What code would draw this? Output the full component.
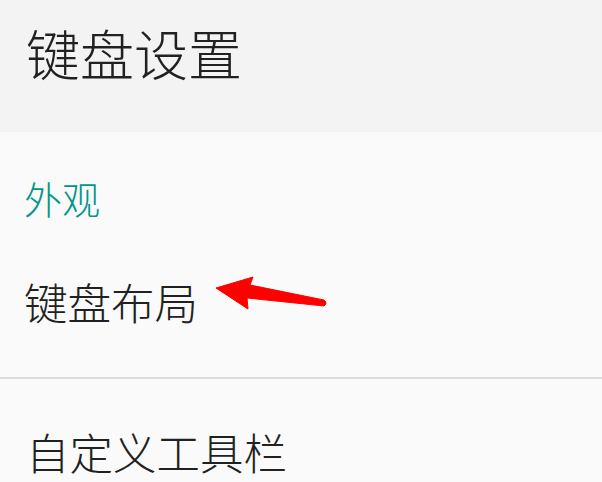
export default function App() {
  const font = { fontFamily: '"Noto Sans CJK SC", "Noto Sans", sans-serif' };
  return (
    <div className="relative w-[602px] h-[482px] overflow-hidden bg-[#fafafa]" style={font}>
      <div className="h-[132px] bg-[#f3f3f3] pl-[26px] pt-[25px]">
        <div className="text-[54px] leading-[55px] font-light text-[#212121]">键盘设置</div>
      </div>
      <div className="pl-[24px] pt-[47px]">
        <div className="text-[38px] leading-[38.5px] font-light text-[#009688]">外观</div>
      </div>
      <div className="pl-[24px] pt-[62px] pb-[53px]">
        <div className="text-[43.5px] leading-[44px] font-light text-[#212121]">键盘布局</div>
      </div>
      <div className="h-[2px] bg-[#dcdcdc]" />
      <div className="pl-[26px] pt-[51px]">
        <div className="text-[43.5px] leading-[44px] font-light text-[#212121]">自定义工具栏</div>
      </div>
      <svg className="absolute left-0 top-0" width="602" height="482" viewBox="0 0 602 482">
        <path
          d="M216 288 L253 277 L250 285 L324 300 Q328 303 324 306 L247 298 L248 309 Z"
          fill="#ff0000"
          stroke="#ff0000"
          strokeWidth="1"
          strokeLinejoin="round"
        />
      </svg>
    </div>
  );
}
